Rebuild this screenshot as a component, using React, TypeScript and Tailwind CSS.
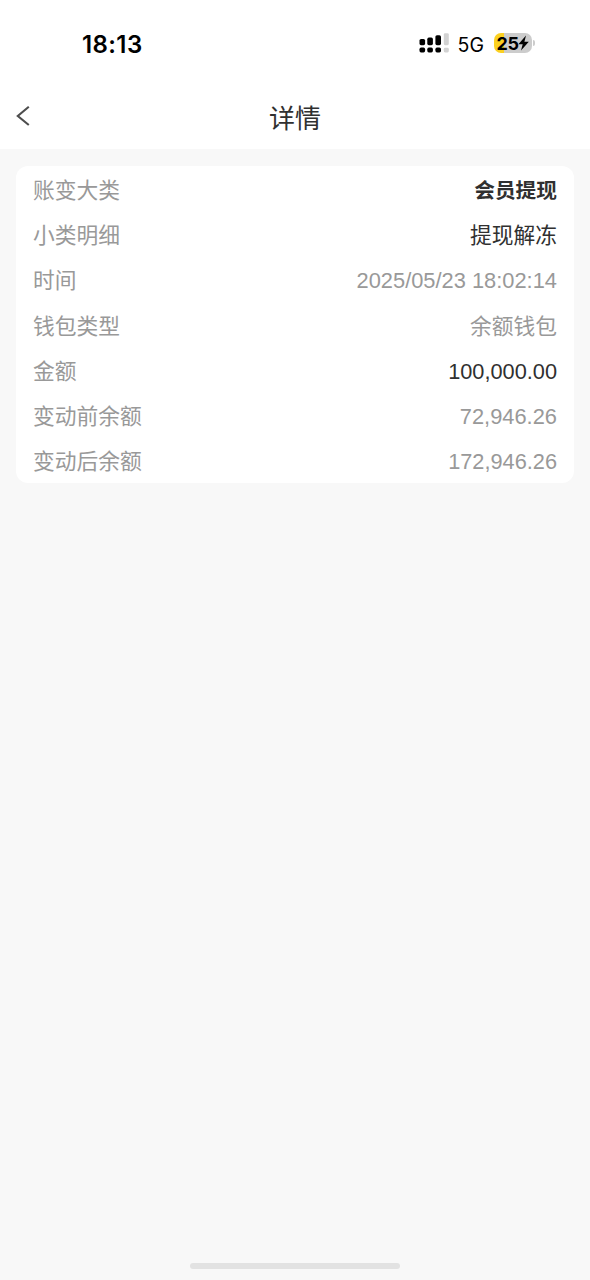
type Detail = {
  label: string;
  value: string;
  valueClass: string;
};

const details: Detail[] = [
  { label: '账变大类', value: '会员提现', valueClass: 'text-[20.7px] font-bold text-[#303030]' },
  { label: '小类明细', value: '提现解冻', valueClass: 'text-[#303030]' },
  { label: '时间', value: '2025/05/23 18:02:14', valueClass: 'text-[21.85px] text-[#999999]' },
  { label: '钱包类型', value: '余额钱包', valueClass: 'text-[#999999]' },
  { label: '金额', value: '100,000.00', valueClass: 'text-[#303030]' },
  { label: '变动前余额', value: '72,946.26', valueClass: 'text-[21.85px] text-[#999999]' },
  { label: '变动后余额', value: '172,946.26', valueClass: 'text-[#999999]' },
];

// Dual SIM signal: bars on top, dots below
const SignalIcon = () => (
  <svg width="30" height="20" viewBox="0 0 30 20">
    <g fill="#000000">
      <rect x="0.5" y="6" width="5.6" height="6.2" rx="1.6" />
      <rect x="8.3" y="4.6" width="5.6" height="7.6" rx="1.6" />
      <rect x="16.4" y="2.2" width="5.6" height="10" rx="1.6" />
      <rect x="0.5" y="14.6" width="5.6" height="4.8" rx="1.6" />
      <rect x="8.3" y="14.6" width="5.6" height="4.8" rx="1.6" />
      <rect x="16.4" y="14.6" width="5.6" height="4.8" rx="1.6" />
    </g>
    <g fill="#d2d2d2">
      <rect x="24.8" y="0.2" width="5" height="12" rx="1.4" />
      <rect x="24.8" y="14.8" width="5" height="4.6" rx="1.4" />
    </g>
  </svg>
);

const BatteryIcon = () => (
  <div className="flex items-center">
    <div className="flex h-5 w-[38px] items-center justify-center rounded-[7px] bg-[linear-gradient(90deg,#fbd021_26%,#cccccc_26%)]">
      <span className="pt-px text-[18px] leading-5 font-bold tracking-[-0.5px]">25</span>
      <svg width="11" height="16" viewBox="0 0 11 16">
        <path d="M8 0.6 0.4 9.2h4.3L3 15.4 10.8 6.8H6.4z" fill="#000000" />
      </svg>
    </div>
    <div className="ml-px h-[6px] w-[2px] rounded-r-full bg-[#cccccc]"></div>
  </div>
);

const StatusBar = () => (
  <div className="flex h-[84px] items-start justify-between pr-[55px] pl-[82px] font-['Inter',sans-serif] text-black">
    <span className="mt-[30px] text-[24px] leading-[30px] font-semibold tracking-[0.4px]">18:13</span>
    <div className="mt-[33px] flex h-5 items-center">
      <SignalIcon />
      <span className="mr-[10px] ml-[9px] pt-[3px] text-[19.5px] leading-5">5G</span>
      <BatteryIcon />
    </div>
  </div>
);

const Header = () => (
  <header className="grid h-[65px] grid-cols-3 items-center">
    <button className="mb-px ml-[15px] w-4" aria-label="返回">
      <svg width="16" height="22" viewBox="0 0 16 22" fill="none">
        <path d="M13.8 1.8 2.8 11 13.8 20" stroke="#4d4d4d" strokeWidth="2.1" />
      </svg>
    </button>
    <h1 className="pt-[4px] text-center text-[26px] leading-[38px] text-[#303030]">详情</h1>
  </header>
);

function App() {
  return (
    <div className="flex h-screen flex-col bg-[#f8f8f8] font-['Liberation_Sans','Noto_Sans_CJK_SC',sans-serif]">
      <div className="bg-white">
        <StatusBar />
        <Header />
      </div>

      <main className="flex-1 px-4 pt-[17px]">
        <div className="rounded-xl bg-white px-[17px]">
          {details.map((item) => (
            <div
              key={item.label}
              className="flex h-[45.3px] items-center justify-between pt-[4px] text-[21.75px] leading-[32px]"
            >
              <span className="text-[#999999]">{item.label}</span>
              <span className={item.valueClass}>{item.value}</span>
            </div>
          ))}
        </div>
      </main>

      {/* Home indicator */}
      <div className="mx-auto mb-[11px] h-[6px] w-[210px] rounded-full bg-[#e2e2e2]"></div>
    </div>
  );
}

export default App;
